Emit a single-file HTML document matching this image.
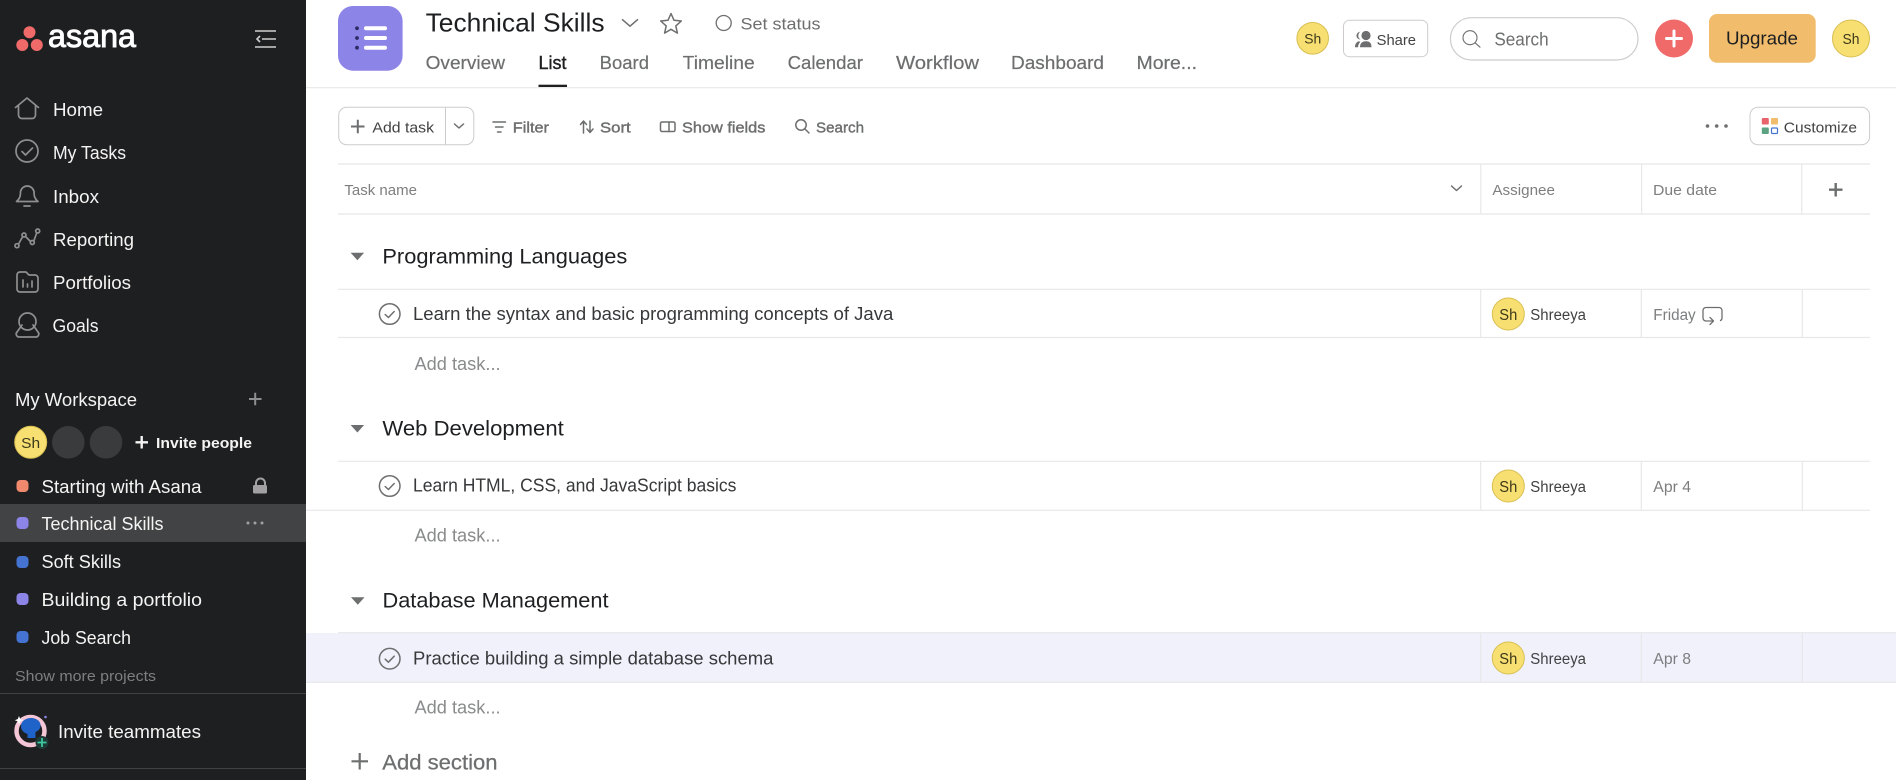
<!DOCTYPE html>
<html><head><meta charset="utf-8"><title>Technical Skills - Asana</title>
<style>
html,body{margin:0;padding:0;background:#fff;overflow:hidden;width:1896px;height:780px}
svg{display:block}
text{font-family:"Liberation Sans",sans-serif;white-space:pre}
.nav{font-size:18px;fill:#f5f4f3}
.tab{font-size:18px;fill:#6d6e6f;stroke:#6d6e6f;stroke-width:.2px}
.tb{font-size:15px;fill:#6d6e6f;stroke:#6d6e6f;stroke-width:.4px}
.th{font-size:15px;fill:#7d7e7f}
.sec{font-size:21px;fill:#1e1f21}
.task{font-size:18px;fill:#37383a}
.add{font-size:18px;fill:#8a8b8c}
.who{font-size:15.5px;fill:#424244}
.due{font-size:15.5px;fill:#7d7e7f}
.sh{fill:#3d3a1c;font-size:15px;text-anchor:middle}
.ln{stroke:#e8e8e9;stroke-width:1.2;fill:none}
.ic{stroke:#8f8f90;stroke-width:1.7;fill:none;stroke-linecap:round;stroke-linejoin:round}
.tic{stroke:#6d6e6f;stroke-width:1.5;fill:none;stroke-linecap:round;stroke-linejoin:round}
</style></head>
<body>
<svg width="1896" height="780" viewBox="0 0 1896 780" xmlns="http://www.w3.org/2000/svg">
<rect width="1896" height="780" fill="#fff"/>

<!-- Sidebar -->
<rect width="306" height="780" fill="#1e1f21"/>
<circle cx="29.5" cy="32.3" r="6" fill="#f06a6a"/>
<circle cx="22.3" cy="45" r="6" fill="#f06a6a"/>
<circle cx="36.8" cy="45" r="6" fill="#f06a6a"/>
<text x="48" y="47" font-size="32" fill="#fff" stroke="#fff" stroke-width=".9" textLength="88" lengthAdjust="spacingAndGlyphs">asana</text>
<g stroke="#cfcfd0" stroke-width="1.6" fill="none">
<path d="M255 31h21M255 47h21M262 39h14"/>
<path d="M260 36l-3 3 3 3"/>
</g>

<path class="ic" d="M15.5 107.5L27 98l11.500 9.500M18.500 105.500V115a3.500 3.500 0 0 0 3.500 3.500h10a3.500 3.500 0 0 0 3.500-3.500V105.500"/>
<text class="nav" x="53" y="116" textLength="50" lengthAdjust="spacingAndGlyphs">Home</text>
<circle class="ic" cx="27" cy="151" r="11"/>
<path class="ic" d="M22 151.500l3.500 3.500 7-7"/>
<text class="nav" x="53" y="159" textLength="73" lengthAdjust="spacingAndGlyphs">My Tasks</text>
<path class="ic" d="M16.500 201.500c3.500-3 4-5.500 4-10a7 7.500 0 0 1 13.500 0c0 4.500.5 7 4 10zM24 206h6"/>
<text class="nav" x="53" y="203" textLength="46" lengthAdjust="spacingAndGlyphs">Inbox</text>
<path class="ic" d="M18.500 244l4-7M26 237l4.500 4.500M34 240.500l2.500-7"/>
<circle class="ic" cx="17" cy="245.700" r="2"/><circle class="ic" cx="24" cy="235" r="2"/><circle class="ic" cx="32.300" cy="242.500" r="2"/><circle class="ic" cx="37.700" cy="231" r="2"/>
<text class="nav" x="53" y="246" textLength="81" lengthAdjust="spacingAndGlyphs">Reporting</text>
<path class="ic" d="M17 275a3 3 0 0 1 3-3h6l3 3h6a3 3 0 0 1 3 3v11a3 3 0 0 1-3 3H20a3 3 0 0 1-3-3z"/>
<path class="ic" d="M23 280v7M27.500 284v3M32 281v6"/>
<text class="nav" x="53" y="289" textLength="78" lengthAdjust="spacingAndGlyphs">Portfolios</text>
<circle class="ic" cx="27.500" cy="321.500" r="8.500"/>
<path class="ic" d="M22 325l-5 7a3 3 0 0 0 2.500 5h16a3 3 0 0 0 2.500-5l-5-7"/>
<text class="nav" x="52.500" y="332" textLength="46" lengthAdjust="spacingAndGlyphs">Goals</text>

<text class="nav" x="15" y="406" textLength="122" lengthAdjust="spacingAndGlyphs">My Workspace</text>
<path d="M249 399h12.500M255.200 392.700v12.500" stroke="#8f8f90" stroke-width="2"/>
<circle cx="30.700" cy="442.300" r="16" fill="#f8df72" stroke="#d8bf52"/>
<text x="30.700" y="448" class="sh" textLength="19" lengthAdjust="spacingAndGlyphs">Sh</text>
<circle cx="68.300" cy="442.300" r="16.300" fill="#3a3b3d"/>
<circle cx="106" cy="442.300" r="16.300" fill="#3a3b3d"/>
<path d="M135.500 442.300h12.500M141.700 436v12.500" stroke="#f5f4f3" stroke-width="2.400"/>
<text x="156" y="448" font-size="15" font-weight="bold" fill="#f5f4f3" textLength="96" lengthAdjust="spacingAndGlyphs">Invite people</text>

<rect y="504" width="306" height="38" fill="#424345"/>
<rect x="16.500" y="480" width="12" height="12" rx="4" fill="#f1896f"/>
<text class="nav" x="41.500" y="493" textLength="160" lengthAdjust="spacingAndGlyphs">Starting with Asana</text>
<path d="M256 486v-3a4.500 4.500 0 0 1 9 0v3" stroke="#a2a0a2" stroke-width="2" fill="none"/>
<rect x="253" y="485" width="14" height="8.500" rx="1.500" fill="#a2a0a2"/>
<rect x="16.500" y="517" width="12" height="12" rx="4" fill="#8d84e8"/>
<text class="nav" x="41.500" y="530" textLength="122" lengthAdjust="spacingAndGlyphs">Technical Skills</text>
<circle cx="248" cy="523" r="1.500" fill="#a2a0a2"/><circle cx="255" cy="523" r="1.500" fill="#a2a0a2"/><circle cx="262" cy="523" r="1.500" fill="#a2a0a2"/>
<rect x="16.500" y="556" width="12" height="12" rx="4" fill="#4573d2"/>
<text class="nav" x="41.500" y="568" textLength="79.500" lengthAdjust="spacingAndGlyphs">Soft Skills</text>
<rect x="16.500" y="593" width="12" height="12" rx="4" fill="#8d84e8"/>
<text class="nav" x="41.500" y="606" textLength="160.500" lengthAdjust="spacingAndGlyphs">Building a portfolio</text>
<rect x="16.500" y="631" width="12" height="12" rx="4" fill="#4573d2"/>
<text class="nav" x="41.500" y="644" textLength="89.500" lengthAdjust="spacingAndGlyphs">Job Search</text>
<text x="15" y="681" font-size="15" fill="#7e7f80" textLength="141" lengthAdjust="spacingAndGlyphs">Show more projects</text>
<path d="M0 693.500h306M0 768.500h306" stroke="#424244" stroke-width="1"/>

<circle cx="30.500" cy="731" r="14" fill="none" stroke="#f4c6d6" stroke-width="4.500"/>
<path d="M21 726c0-5 5-8 10-8s10 3 9.500 8c-.5 4-3 5-5 6v6h-8v-4c-3-1-6.500-3-6.500-8z" fill="#1f62c8"/>
<path d="M19 716l1.200 3 3 1.200-3 1.200-1.200 3-1.200-3-3-1.200 3-1.200z" fill="#fff"/>
<circle cx="45.500" cy="717" r="1.300" fill="#8d84e8"/>
<circle cx="42" cy="742.500" r="6.500" fill="#1e3a36"/>
<path d="M37.500 742.500h9M42 738v9" stroke="#3cc9a0" stroke-width="1.800"/>
<text class="nav" x="58" y="738" textLength="143" lengthAdjust="spacingAndGlyphs">Invite teammates</text>

<!-- Header -->
<rect x="338" y="6" width="64.600" height="64.700" rx="15" fill="#8d84e8"/>
<g stroke="#fff" stroke-width="4" stroke-linecap="round"><path d="M366 28.300h19M366 38h19M366 47.700h19"/></g>
<circle cx="357" cy="28.300" r="1.900" fill="#2f2a66"/><circle cx="357" cy="38" r="1.900" fill="#2f2a66"/><circle cx="357" cy="47.700" r="1.900" fill="#2f2a66"/>
<text x="425.600" y="31.700" font-size="26" fill="#1e1f21" textLength="179" lengthAdjust="spacingAndGlyphs">Technical Skills</text>
<path d="M622.500 19.700l7.500 6.500 7.500-6.500" class="tic" stroke-width="1.800"/>
<path d="M671 13.500l3 6.800 7.300.7-5.500 4.900 1.600 7.200-6.400-3.800-6.400 3.800 1.600-7.200-5.500-4.900 7.300-.7z" class="tic" stroke-width="1.300"/>
<circle cx="723.700" cy="23" r="7.500" fill="none" stroke="#6d6e6f" stroke-width="1.300"/>
<text x="740.500" y="29.300" font-size="17" fill="#6d6e6f" textLength="80" lengthAdjust="spacingAndGlyphs">Set status</text>

<text class="tab" x="425.600" y="69" textLength="79.400" lengthAdjust="spacingAndGlyphs">Overview</text>
<text x="538.500" y="69" font-size="18" fill="#1e1f21" stroke="#1e1f21" stroke-width=".4" textLength="28" lengthAdjust="spacingAndGlyphs">List</text>
<text class="tab" x="599.700" y="69" textLength="49.300" lengthAdjust="spacingAndGlyphs">Board</text>
<text class="tab" x="682.700" y="69" textLength="72" lengthAdjust="spacingAndGlyphs">Timeline</text>
<text class="tab" x="787.600" y="69" textLength="75.400" lengthAdjust="spacingAndGlyphs">Calendar</text>
<text class="tab" x="896" y="69" textLength="83" lengthAdjust="spacingAndGlyphs">Workflow</text>
<text class="tab" x="1011" y="69" textLength="93" lengthAdjust="spacingAndGlyphs">Dashboard</text>
<text class="tab" x="1136.500" y="69" textLength="60.500" lengthAdjust="spacingAndGlyphs">More...</text>
<rect x="538.500" y="84.700" width="28.500" height="2.300" fill="#1e1f21"/>
<path d="M306 87.700h1590" class="ln"/>

<!-- Header right -->
<circle cx="1312.700" cy="38.300" r="15.800" fill="#f8df72" stroke="#d8bf52"/>
<text x="1312.700" y="43.500" class="sh" style="font-size:14px" textLength="17" lengthAdjust="spacingAndGlyphs">Sh</text>
<rect x="1343.500" y="20.300" width="84.200" height="36.400" rx="6" fill="#fff" stroke="#cfcbcb"/>
<circle cx="1366" cy="35.500" r="4.600" fill="#6d6e6f"/>
<path d="M1360.500 31.500c-2.800.8-4 2.300-4 4.200 0 1.800 1.200 3.200 4 3.900-1.400-1.100-2.200-2.400-2.200-3.900 0-1.700.8-3.100 2.200-4.200z" fill="#6d6e6f"/>
<path d="M1360 47.300c0-3.800 2-6 6-6s5.500 2.200 5.500 6zM1355 47.300c0-3 1.300-5.500 4-6l1.300.6c-1.300 1.300-2.200 3.200-2.200 5.400z" fill="#6d6e6f"/>
<text x="1376.600" y="45" font-size="15" fill="#424244" textLength="39.400" lengthAdjust="spacingAndGlyphs">Share</text>
<rect x="1450.400" y="17.700" width="187.600" height="42.300" rx="21.100" fill="#fff" stroke="#cfcbcb" stroke-width="1.200"/>
<circle cx="1470" cy="37.700" r="7" fill="none" stroke="#6d6e6f" stroke-width="1.100"/>
<path d="M1475 42.700l5 4.500" stroke="#6d6e6f" stroke-width="1.100" stroke-linecap="round"/>
<text x="1494.400" y="45.500" font-size="18" fill="#6d6e6f" textLength="54.200" lengthAdjust="spacingAndGlyphs">Search</text>
<circle cx="1674" cy="38.500" r="19" fill="#f06a6a"/>
<path d="M1666.500 38.500h15M1674 31v15" stroke="#fff" stroke-width="3" stroke-linecap="round"/>
<rect x="1709" y="14" width="106.700" height="48.700" rx="8" fill="#f1bd6c"/>
<text x="1726" y="44.700" font-size="18" fill="#1e1f21" textLength="72" lengthAdjust="spacingAndGlyphs">Upgrade</text>
<circle cx="1851" cy="38.500" r="18.500" fill="#f8df72" stroke="#d8bf52"/>
<text x="1851" y="44" class="sh" style="font-size:15px" textLength="17" lengthAdjust="spacingAndGlyphs">Sh</text>

<!-- Toolbar -->
<rect x="338.700" y="107.300" width="135.100" height="37.400" rx="8" fill="#fff" stroke="#cfcbcb"/>
<path d="M445.500 107.300v37.400" stroke="#cfcbcb"/>
<path d="M351 126.500h13.500M357.800 119.700v13.500" stroke="#6d6e6f" stroke-width="2"/>
<text x="372.400" y="132.300" font-size="15" fill="#424244" textLength="61.600" lengthAdjust="spacingAndGlyphs">Add task</text>
<path d="M454.500 124l4.500 4 4.500-4" class="tic" stroke-width="1.800"/>
<path d="M493 122h12.500M495.500 127h7.500M497.500 132h3.500" class="tic" stroke-width="1.200"/>
<text class="tb" x="512.800" y="132.300" textLength="36.200" lengthAdjust="spacingAndGlyphs">Filter</text>
<path d="M583.500 133v-11.500M580.500 124.500l3-3.500 3 3.500M590 121v11.500M587 129l3 3.500 3-3.500" class="tic" stroke-width="1.500"/>
<text class="tb" x="600" y="132.300" textLength="30.700" lengthAdjust="spacingAndGlyphs">Sort</text>
<rect x="660.500" y="122" width="14.500" height="9.500" rx="1.500" class="tic" stroke-width="1.200"/>
<path d="M669 122v9.500" class="tic" stroke-width="1.200"/>
<text class="tb" x="682" y="132.300" textLength="83.400" lengthAdjust="spacingAndGlyphs">Show fields</text>
<circle cx="801" cy="125" r="5.200" class="tic" stroke-width="1.700"/>
<path d="M805 129l4 4" class="tic" stroke-width="1.800"/>
<text class="tb" x="816" y="132.300" textLength="48" lengthAdjust="spacingAndGlyphs">Search</text>
<circle cx="1707.500" cy="126" r="1.800" fill="#6d6e6f"/><circle cx="1716.700" cy="126" r="1.800" fill="#6d6e6f"/><circle cx="1726" cy="126" r="1.800" fill="#6d6e6f"/>
<rect x="1750" y="107.300" width="119.600" height="37.400" rx="8" fill="#fff" stroke="#cfcbcb"/>
<rect x="1761.800" y="118" width="7" height="6.500" rx="1" fill="#e8636c"/>
<rect x="1771" y="118" width="7" height="6.500" rx="1" fill="#f1bd6c"/>
<rect x="1761.800" y="127.500" width="7" height="6.500" rx="1" fill="#5da283"/>
<rect x="1771.500" y="128" width="6" height="5.500" rx="1" fill="#fff" stroke="#4573d2" stroke-width="1.200"/>
<text x="1783.800" y="132.300" font-size="15" fill="#424244" textLength="73.200" lengthAdjust="spacingAndGlyphs">Customize</text>

<!-- Table header -->
<path class="ln" d="M338 164h1532M338 214h1532M1480.800 164v50M1641.600 164v50M1801.700 164v50"/>
<text class="th" x="344.400" y="195" textLength="72.600" lengthAdjust="spacingAndGlyphs">Task name</text>
<path d="M1451.500 186l5 4.500 5-4.500" class="tic" stroke-width="1.800"/>
<text class="th" x="1492.400" y="195" textLength="62.600" lengthAdjust="spacingAndGlyphs">Assignee</text>
<text class="th" x="1653" y="195" textLength="64" lengthAdjust="spacingAndGlyphs">Due date</text>
<path d="M1829 189.700h13.500M1835.700 183v13.500" stroke="#6d6e6f" stroke-width="2.400"/>

<!-- Section 1 -->
<path d="M350.600 252.700h13.500l-6.700 7.500z" fill="#6d6e6f"/>
<text class="sec" x="382.400" y="263.300" textLength="244.900" lengthAdjust="spacingAndGlyphs">Programming Languages</text>
<path class="ln" d="M338 289.300h1532M338 337.500h1532M1480.700 289.300v49M1641.300 289.300v49M1802.300 289.300v49"/>
<circle cx="389.700" cy="314" r="10.300" class="tic" stroke-width="1.300"/>
<path d="M385.200 314.500l3.200 3 5.800-6" class="tic" stroke-width="1.100"/>
<text class="task" x="413" y="320" textLength="480.300" lengthAdjust="spacingAndGlyphs">Learn the syntax and basic programming concepts of Java</text>
<circle cx="1508.300" cy="314" r="16" fill="#f8df72" stroke="#d8bf52"/>
<text x="1508.300" y="320" class="sh" style="font-size:16px" textLength="18" lengthAdjust="spacingAndGlyphs">Sh</text>
<text class="who" x="1530.300" y="320" textLength="55.700" lengthAdjust="spacingAndGlyphs">Shreeya</text>
<text class="due" x="1653.300" y="320" textLength="42.400" lengthAdjust="spacingAndGlyphs">Friday</text>
<path d="M1713 321h-7a3 3 0 0 1-3-3v-7.500a3 3 0 0 1 3-3h13a3 3 0 0 1 3 3v7.500a3 3 0 0 1-1.500 2.600M1710 317.500l3.500 3.500-3.500 3.500" fill="none" stroke="#6d6e6f" stroke-width="1.300" stroke-linecap="round" stroke-linejoin="round"/>
<text class="add" x="414.500" y="370" textLength="86.100" lengthAdjust="spacingAndGlyphs">Add task...</text>

<!-- Section 2 -->
<path d="M350.600 425h13.500l-6.700 7.500z" fill="#6d6e6f"/>
<text class="sec" x="382.400" y="435.700" textLength="181.400" lengthAdjust="spacingAndGlyphs">Web Development</text>
<path class="ln" d="M338 461.300h1532M306 510.300h1564M1480.700 461.300v49M1641.300 461.300v49M1802.300 461.300v49"/>
<circle cx="389.700" cy="486" r="10.300" class="tic" stroke-width="1.300"/>
<path d="M385.200 486.500l3.200 3 5.800-6" class="tic" stroke-width="1.100"/>
<text class="task" x="413" y="491.700" textLength="323.400" lengthAdjust="spacingAndGlyphs">Learn HTML, CSS, and JavaScript basics</text>
<circle cx="1508.300" cy="486" r="16" fill="#f8df72" stroke="#d8bf52"/>
<text x="1508.300" y="492" class="sh" style="font-size:16px" textLength="18" lengthAdjust="spacingAndGlyphs">Sh</text>
<text class="who" x="1530.300" y="492" textLength="55.700" lengthAdjust="spacingAndGlyphs">Shreeya</text>
<text class="due" x="1653.300" y="492" textLength="37.700" lengthAdjust="spacingAndGlyphs">Apr 4</text>
<text class="add" x="414.500" y="541.700" textLength="86.100" lengthAdjust="spacingAndGlyphs">Add task...</text>

<!-- Section 3 -->
<path d="M351 597.300h13.500l-6.700 7.500z" fill="#6d6e6f"/>
<text class="sec" x="382.500" y="607.300" textLength="226" lengthAdjust="spacingAndGlyphs">Database Management</text>
<rect x="306" y="633" width="1590" height="49" fill="#f0f1fb"/>
<path class="ln" d="M338 632.700h1558M306 682.300h1590M1480.700 633v49M1641.300 633v49M1802.300 633v49"/>
<circle cx="389.700" cy="658.700" r="10.300" class="tic" stroke-width="1.300"/>
<path d="M385.200 659.200l3.200 3 5.800-6" class="tic" stroke-width="1.100"/>
<text class="task" x="413" y="664.300" textLength="360.400" lengthAdjust="spacingAndGlyphs">Practice building a simple database schema</text>
<circle cx="1508.300" cy="658" r="16" fill="#f8df72" stroke="#d8bf52"/>
<text x="1508.300" y="664" class="sh" style="font-size:16px" textLength="18" lengthAdjust="spacingAndGlyphs">Sh</text>
<text class="who" x="1530.300" y="664" textLength="55.700" lengthAdjust="spacingAndGlyphs">Shreeya</text>
<text class="due" x="1653.300" y="664" textLength="37.700" lengthAdjust="spacingAndGlyphs">Apr 8</text>
<text class="add" x="414.500" y="713.300" textLength="86.100" lengthAdjust="spacingAndGlyphs">Add task...</text>

<path d="M351.500 761.300h16.500M359.700 753v16.500" stroke="#6d6e6f" stroke-width="2.200"/>
<text x="382.300" y="769.300" font-size="21" fill="#6d6e6f" stroke="#6d6e6f" stroke-width=".25" textLength="115.200" lengthAdjust="spacingAndGlyphs">Add section</text>
</svg>
</body></html>
